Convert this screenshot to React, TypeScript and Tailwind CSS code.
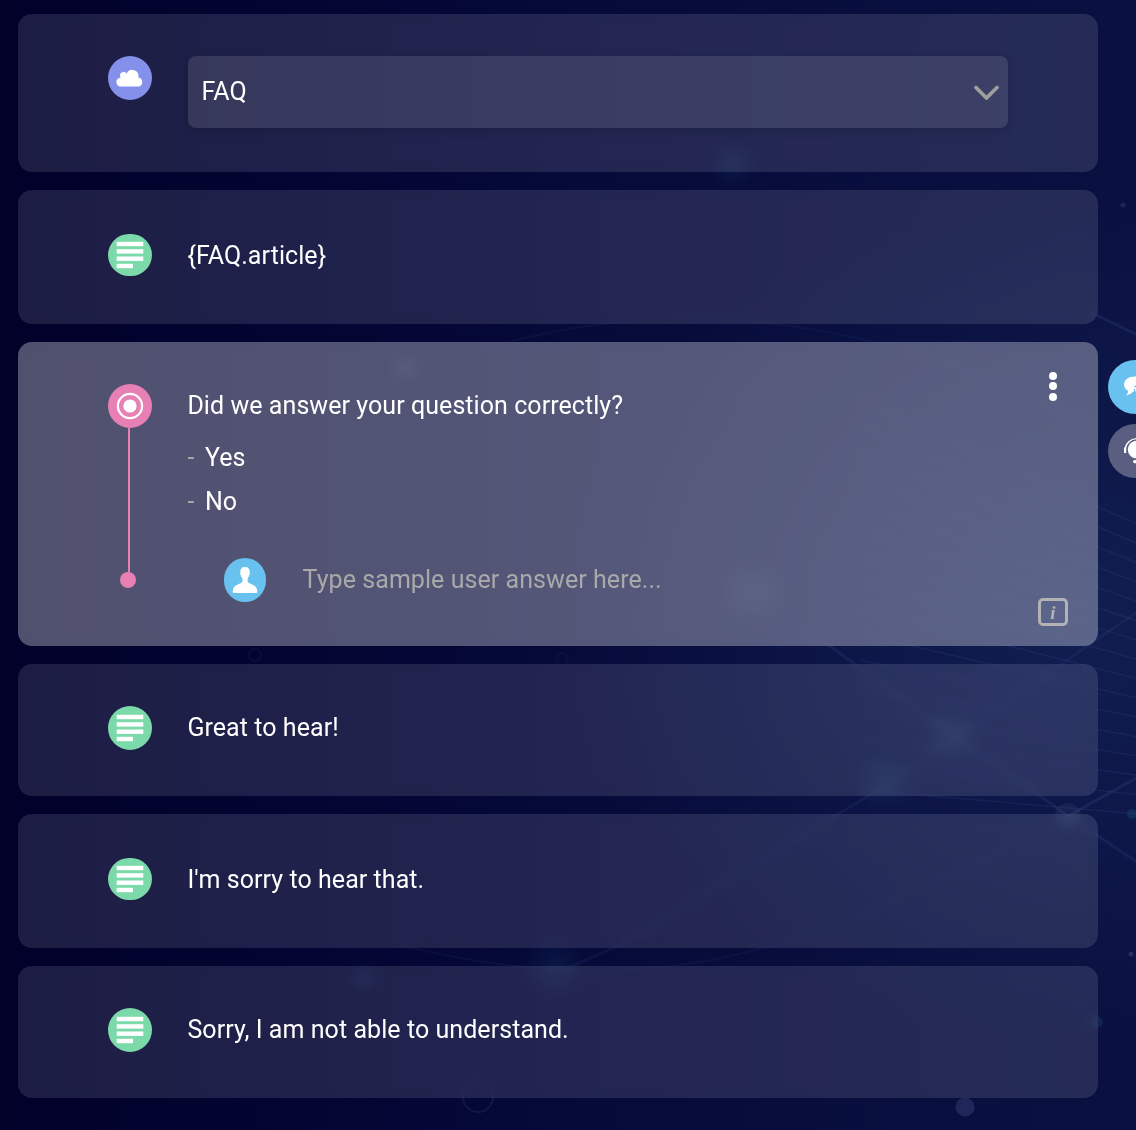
import type { ReactNode } from "react";

function Backdrop() {
  const rays = Array.from({ length: 16 }, (_, i) => i);
  return (
    <svg className="pointer-events-none absolute inset-0 h-full w-full" viewBox="0 0 1136 1130" fill="none">
      <defs>
        <radialGradient id="glow">
          <stop offset="0" stopColor="#1a2f66" stopOpacity=".45" />
          <stop offset="1" stopColor="#1a2f66" stopOpacity="0" />
        </radialGradient>
        <radialGradient id="dot">
          <stop offset="0" stopColor="#8fa0c8" stopOpacity=".08" />
          <stop offset="1" stopColor="#8fa0c8" stopOpacity="0" />
        </radialGradient>
        <radialGradient id="teal">
          <stop offset="0" stopColor="#2f7fa0" stopOpacity=".12" />
          <stop offset="1" stopColor="#2f7fa0" stopOpacity="0" />
        </radialGradient>
      </defs>
      <ellipse cx="1060" cy="620" rx="500" ry="420" fill="url(#glow)" />
      <g stroke="#5560a0" strokeOpacity=".18" strokeWidth="3">
        <path d="M1090 312 L1140 336" />
        <path d="M570 967 L620 945 L870 795 L1140 610" strokeOpacity=".11" />
        <path d="M800 625 L1068 816 L1140 864" strokeOpacity=".14" />
        <path d="M1068 816 L1140 776" />
        <path d="M400 945 Q560 985 700 962 T1068 816" strokeWidth="2" strokeOpacity=".08" />
        <path d="M480 350 Q780 260 1098 430" strokeWidth="2" strokeOpacity=".08" />
      </g>
      <g stroke="#5560a0" strokeOpacity=".14" strokeWidth="1.5">
        {rays.map((i) => (
          <path key={i} d={`M860 ${400 + i * 26} L1150 ${530 + i * 19}`} />
        ))}
      </g>
      <circle cx="950" cy="735" r="34" fill="url(#dot)" />
      <circle cx="752" cy="592" r="36" fill="url(#dot)" />
      <circle cx="406" cy="368" r="18" fill="url(#dot)" />
      <circle cx="733" cy="164" r="24" fill="url(#teal)" />
      <circle cx="885" cy="782" r="32" fill="url(#teal)" />
      <circle cx="555" cy="967" r="32" fill="url(#teal)" />
      <circle cx="364" cy="978" r="16" fill="url(#teal)" />
      <circle cx="1068" cy="816" r="13" fill="#8fa0c8" fillOpacity=".08" />
      <circle cx="965" cy="1107" r="9.5" fill="#6f7cc0" fillOpacity=".22" />
      <circle cx="1097" cy="1022" r="6" fill="#2f7fa0" fillOpacity=".16" />
      <circle cx="1132" cy="814" r="5" fill="#2f7fa0" fillOpacity=".2" />
      <circle cx="1123" cy="205" r="2.5" fill="#6f7cc0" fillOpacity=".2" />
      <circle cx="1131" cy="954" r="2.5" fill="#6f7cc0" fillOpacity=".25" />
      <circle cx="478" cy="1097" r="15" stroke="#6f7cc0" strokeOpacity=".12" strokeWidth="2" />
      <circle cx="255" cy="655" r="6" stroke="#6f7cc0" strokeOpacity=".08" strokeWidth="2" />
      <circle cx="562" cy="659" r="6" stroke="#6f7cc0" strokeOpacity=".06" strokeWidth="2" />
    </svg>
  );
}

function TextIcon({ className }: { className: string }) {
  return (
    <div className={`flex w-11 shrink-0 items-center justify-center rounded-[22px] bg-[#7cd9a9] ${className}`}>
      <svg width="28" height="28" viewBox="0 0 28 28" fill="#fff">
        <rect x=".7" y=".8" width="26.6" height="4.4" />
        <rect x=".7" y="8.2" width="26.6" height="4.4" />
        <rect x=".7" y="15.5" width="26.6" height="4.4" />
        <rect x=".7" y="22.8" width="16.3" height="4.4" />
      </svg>
    </div>
  );
}

function Card({ className, children }: { className: string; children: ReactNode }) {
  return (
    <section className={`flex shrink-0 items-start gap-9 rounded-[14px] pl-[90px] backdrop-blur-[5px] ${className}`}>
      {children}
    </section>
  );
}

function Message({ card, icon, children }: { card: string; icon: string; children: ReactNode }) {
  return (
    <Card className={`bg-[#f0eeff]/12 ${card}`}>
      <TextIcon className={icon} />
      <p className="-ml-[0.6px] leading-[44px]">{children}</p>
    </Card>
  );
}

export default function App() {
  return (
    <div className="relative flex h-[1130px] w-[1136px] overflow-hidden bg-linear-to-r from-[#01012a] via-[#060a39] to-[#0a1140] font-['Roboto',sans-serif] text-[25px] tracking-[0.06px] text-white">
      <Backdrop />
      <main className="relative ml-[18px] flex w-[1080px] shrink-0 flex-col gap-[18px] pt-[14px]">
        <Card className="h-[158px] bg-[#f0eeff]/12 pt-[42px]">
          <div className="flex size-11 shrink-0 items-center justify-center rounded-full bg-[#8590ea]">
            <svg width="28" height="20" viewBox="0 0 28 20" fill="#fff">
              <path d="M5.2 18.6 A4.6 4.6 0 0 1 4.7 9.4 A3.5 3.5 0 0 1 10.6 5.4 A6.3 6.3 0 0 1 22.4 9.4 A4.7 4.7 0 0 1 22.6 18.6 Z" />
            </svg>
          </div>
          <button className="flex h-[72px] w-[820px] items-center justify-between rounded-lg bg-white/11 pr-2 pl-[13.5px] shadow-[0_2px_10px_rgba(0,0,0,0.15)]">
            <span>FAQ</span>
            <svg width="27" height="16" viewBox="0 0 27 16" fill="none" stroke="#a09f9d" strokeWidth="3.6" strokeLinecap="round" strokeLinejoin="miter">
              <path d="M3 3.5 L13.5 14 L24 3.5" />
            </svg>
          </button>
        </Card>

        <Message card="h-[134px] pt-[44px]" icon="h-[42px]">{"{FAQ.article}"}</Message>

        <Card className="relative h-[304px] bg-[#f8f8ff]/32 pt-[42px]">
          <div className="flex w-11 shrink-0 flex-col items-center">
            <div className="flex size-11 items-center justify-center rounded-full bg-[#e680b5]">
              <svg width="28" height="28" viewBox="0 0 28 28" fill="none">
                <circle cx="14" cy="14" r="12.1" stroke="#fff" strokeWidth="2.2" />
                <circle cx="14" cy="14" r="6.6" fill="#fff" />
              </svg>
            </div>
            <div className="mr-[2px] h-36 w-[2px] bg-[#e680b5]" />
            <div className="mr-1 size-4 rounded-full bg-[#e680b5]" />
          </div>
          <div className="-ml-[0.6px] flex flex-col">
            <p className="leading-[44px]">Did we answer your question correctly?</p>
            <ul className="mt-2">
              <li className="flex gap-[10.5px] leading-[44px]"><span className="text-[#a9a9a9]">-</span>Yes</li>
              <li className="flex gap-[10.5px] leading-[44px]"><span className="text-[#a9a9a9]">-</span>No</li>
            </ul>
            <div className="mt-[34px] ml-[36.6px] flex items-center gap-[36.6px]">
              <div className="flex h-11 w-[42px] items-center justify-center rounded-[21px] bg-[#69c1ef]">
                <svg width="26" height="28" viewBox="0 0 26 28" fill="#fff">
                  <path d="M13 1 C9.8 1 8.2 3 8.4 6.4 C7.9 6.8 8.1 8.8 8.9 9.3 C9.2 11 9.8 12 10.4 12.7 L10.4 15.4 C9 18.2 1.4 18.3 .9 24 L.7 26 Q.7 27 1.5 27 L24.5 27 Q25.3 27 25.3 26 L25.1 24 C24.6 18.3 17 18.2 15.6 15.4 L15.6 12.7 C16.2 12 16.8 11 17.1 9.3 C17.9 8.8 18.1 6.8 17.6 6.4 C17.8 3 16.2 1 13 1 Z" />
                </svg>
              </div>
              <span className="leading-[44px] text-[#a9a9a9]">Type sample user answer here...</span>
            </div>
          </div>
          <div className="absolute top-[29.5px] right-[41px] flex flex-col gap-[2.8px]">
            <i className="size-2 rounded-full bg-white" />
            <i className="size-2 rounded-full bg-white" />
            <i className="size-2 rounded-full bg-white" />
          </div>
          <div className="absolute right-[30px] bottom-5 flex h-7 w-[30px] items-center justify-center rounded-[5px] border-3 border-[#b3b3b5] font-['Liberation_Serif',serif] text-[19px] leading-none font-bold tracking-normal text-[#b3b3b5] italic">
            i
          </div>
        </Card>

        <Message card="h-[132px] pt-[42px]" icon="h-11">Great to hear!</Message>
        <Message card="h-[134px] pt-[44px]" icon="h-[42px]">I'm sorry to hear that.</Message>
        <Message card="h-[132px] pt-[42px]" icon="h-11">Sorry, I am not able to understand.</Message>
      </main>

      <aside className="relative ml-[10px] flex shrink-0 flex-col gap-[10px] pt-[360px]">
        <div className="flex size-[54px] items-center rounded-full bg-[#69c1ef] pl-4">
          <svg width="30" height="22" viewBox="0 0 30 22" fill="#fff">
            <path d="M11 .5 C4.5 .5 0 4 0 8.6 C0 11.5 1.6 13.6 4.2 14.8 C4.2 16.6 3.4 18 2 19.4 C5 19 7.6 17.6 9 15.8 L22 15.8 L22 .5 Z" />
            <path d="M10.5 10.5 h1.5 M10.5 13 v3.2 h2" stroke="#69c1ef" strokeWidth="1.3" fill="none" />
          </svg>
        </div>
        <div className="flex size-[54px] items-center rounded-full bg-[#5a5e80] pl-4">
          <svg width="28" height="28" viewBox="0 0 28 28" fill="none">
            <path d="M1.2 12 A12 12 0 0 1 25 12" stroke="#fff" strokeWidth="1.4" />
            <path d="M1.1 10.5 v5.5" stroke="#fff" strokeWidth="2.2" />
            <circle cx="12.8" cy="12.6" r="9" fill="#fff" />
            <rect x="9" y="23" width="8" height="3.2" rx="1.6" fill="#fff" />
          </svg>
        </div>
      </aside>
    </div>
  );
}
